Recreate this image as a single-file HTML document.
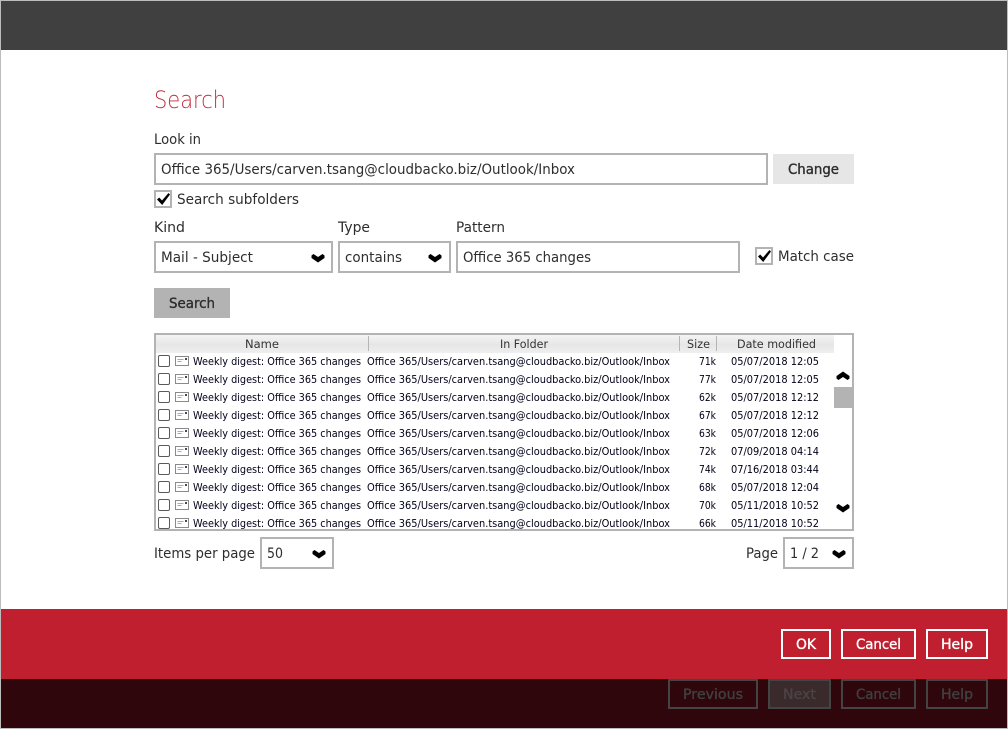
<!DOCTYPE html>
<html><head><meta charset="utf-8"><style>
html,body{margin:0;padding:0;background:#fff}
svg{display:block}
text{font-family:"DejaVu Sans","Liberation Sans",sans-serif;font-size:13.8px;fill:#2e2e2e}
.ttl{font-size:24px;font-weight:200;fill:#bf2e3e}
.b{font-size:13.8px;stroke:#2b2b2b;stroke-width:.35px}
.w{fill:#fff;stroke:#fff}
.d{fill:#404040;stroke:#404040}
.n{fill:#4d4345;stroke:#4d4345}
.t text{font-size:10.7px;fill:#000018}
.h{font-size:11.2px;fill:#333}
</style></head><body>
<svg width="1008" height="729" viewBox="0 0 1008 729" xmlns="http://www.w3.org/2000/svg">
<defs>
<linearGradient id="hd" x1="0" y1="0" x2="0" y2="1"><stop offset="0" stop-color="#f4f4f4"/><stop offset="0.55" stop-color="#e6e6e6"/><stop offset="1" stop-color="#efefef"/></linearGradient>
<path id="chev" d="M0.500 1.500L2.500 0L7 3L11.500 0L13.500 1.500V4L7 8.500L0.500 4Z" fill="#000"/>
<g id="ic"><rect x="158.500" y="0.500" width="11" height="11" rx="1.500" fill="#fff" stroke="#5a5a5a"/>
<rect x="175.500" y="1.500" width="13" height="9" fill="#fff" stroke="#8a8a8a"/><path d="M177.500 4.500h6M177.500 6.500h4" stroke="#aaa"/><rect x="185" y="3" width="2" height="2" fill="#446"/></g>
<path id="ck" d="M0 6.500L2.200 4.500L5 7.500L11.500 0L13 1.500L5.200 12L0 6.500Z" fill="#000"/>
</defs>
<rect width="1008" height="729" fill="#bdbdbd"/>
<rect x="1" y="1" width="1006" height="49" fill="#404040"/>
<rect x="1" y="50" width="1006" height="559" fill="#fff"/>
<rect x="1" y="609" width="1006" height="70" fill="#bf1f2e"/>
<rect x="1" y="679" width="1006" height="49" fill="#2e060b"/>

<text class="ttl" x="154" y="108" textLength="72" lengthAdjust="spacingAndGlyphs">Search</text>
<text x="154" y="144" textLength="47" lengthAdjust="spacingAndGlyphs">Look in</text>

<rect x="155" y="154" width="612" height="30" fill="#fff" stroke="#b3b3b3" stroke-width="2"/>
<text x="161" y="174" textLength="414" lengthAdjust="spacingAndGlyphs">Office 365/Users/carven.tsang@cloudbacko.biz/Outlook/Inbox</text>
<rect x="773" y="154" width="81" height="30" fill="#e6e6e6"/>
<text class="b" x="788" y="174" textLength="51" lengthAdjust="spacingAndGlyphs">Change</text>

<rect x="155" y="191" width="16" height="16" fill="#fff" stroke="#b3b3b3" stroke-width="2"/>
<use href="#ck" x="157" y="193"/>
<text x="177" y="204" textLength="122" lengthAdjust="spacingAndGlyphs">Search subfolders</text>

<text x="154" y="232" textLength="31" lengthAdjust="spacingAndGlyphs">Kind</text>
<text x="338" y="232" textLength="32" lengthAdjust="spacingAndGlyphs">Type</text>
<text x="456" y="232" textLength="49" lengthAdjust="spacingAndGlyphs">Pattern</text>

<rect x="155" y="242" width="177" height="30" fill="#fff" stroke="#b3b3b3" stroke-width="2"/>
<text x="161" y="262" textLength="92" lengthAdjust="spacingAndGlyphs">Mail - Subject</text>
<use href="#chev" x="311" y="254"/>
<rect x="339" y="242" width="111" height="30" fill="#fff" stroke="#b3b3b3" stroke-width="2"/>
<text x="345" y="262" textLength="57" lengthAdjust="spacingAndGlyphs">contains</text>
<use href="#chev" x="428" y="254"/>
<rect x="457" y="242" width="282" height="30" fill="#fff" stroke="#b3b3b3" stroke-width="2"/>
<text x="463" y="262" textLength="128" lengthAdjust="spacingAndGlyphs">Office 365 changes</text>

<rect x="756" y="248" width="16" height="16" fill="#fff" stroke="#b3b3b3" stroke-width="2"/>
<use href="#ck" x="758" y="250"/>
<text x="778" y="261" textLength="76" lengthAdjust="spacingAndGlyphs">Match case</text>

<rect x="154" y="288" width="76" height="30" fill="#b3b3b3"/>
<text class="b" x="169" y="308" textLength="46" lengthAdjust="spacingAndGlyphs">Search</text>

<rect x="155" y="334" width="698" height="196" fill="#fff" stroke="#b3b3b3" stroke-width="2"/>
<rect x="156" y="335" width="678" height="18" fill="url(#hd)"/>
<path d="M368.500 336v15M679.500 336v15M716.500 336v15" stroke="#b5b5b5"/>
<text class="h" x="245" y="348" textLength="34" lengthAdjust="spacingAndGlyphs">Name</text>
<text class="h" x="500" y="348" textLength="48" lengthAdjust="spacingAndGlyphs">In Folder</text>
<text class="h" x="687" y="348" textLength="23" lengthAdjust="spacingAndGlyphs">Size</text>
<text class="h" x="737" y="348" textLength="79" lengthAdjust="spacingAndGlyphs">Date modified</text>

<svg x="156" y="353" width="678" height="176" viewBox="156 353 678 176">
<g class="t">
<g transform="translate(0,355)"><use href="#ic"/><text x="193" y="10" textLength="168" lengthAdjust="spacingAndGlyphs">Weekly digest: Office 365 changes</text><text x="367" y="10" textLength="303" lengthAdjust="spacingAndGlyphs">Office 365/Users/carven.tsang@cloudbacko.biz/Outlook/Inbox</text><text x="699" y="10" textLength="17" lengthAdjust="spacingAndGlyphs">71k</text><text x="731" y="10" textLength="88" lengthAdjust="spacingAndGlyphs">05/07/2018 12:05</text></g>
<g transform="translate(0,373)"><use href="#ic"/><text x="193" y="10" textLength="168" lengthAdjust="spacingAndGlyphs">Weekly digest: Office 365 changes</text><text x="367" y="10" textLength="303" lengthAdjust="spacingAndGlyphs">Office 365/Users/carven.tsang@cloudbacko.biz/Outlook/Inbox</text><text x="699" y="10" textLength="17" lengthAdjust="spacingAndGlyphs">77k</text><text x="731" y="10" textLength="88" lengthAdjust="spacingAndGlyphs">05/07/2018 12:05</text></g>
<g transform="translate(0,391)"><use href="#ic"/><text x="193" y="10" textLength="168" lengthAdjust="spacingAndGlyphs">Weekly digest: Office 365 changes</text><text x="367" y="10" textLength="303" lengthAdjust="spacingAndGlyphs">Office 365/Users/carven.tsang@cloudbacko.biz/Outlook/Inbox</text><text x="699" y="10" textLength="17" lengthAdjust="spacingAndGlyphs">62k</text><text x="731" y="10" textLength="88" lengthAdjust="spacingAndGlyphs">05/07/2018 12:12</text></g>
<g transform="translate(0,409)"><use href="#ic"/><text x="193" y="10" textLength="168" lengthAdjust="spacingAndGlyphs">Weekly digest: Office 365 changes</text><text x="367" y="10" textLength="303" lengthAdjust="spacingAndGlyphs">Office 365/Users/carven.tsang@cloudbacko.biz/Outlook/Inbox</text><text x="699" y="10" textLength="17" lengthAdjust="spacingAndGlyphs">67k</text><text x="731" y="10" textLength="88" lengthAdjust="spacingAndGlyphs">05/07/2018 12:12</text></g>
<g transform="translate(0,427)"><use href="#ic"/><text x="193" y="10" textLength="168" lengthAdjust="spacingAndGlyphs">Weekly digest: Office 365 changes</text><text x="367" y="10" textLength="303" lengthAdjust="spacingAndGlyphs">Office 365/Users/carven.tsang@cloudbacko.biz/Outlook/Inbox</text><text x="699" y="10" textLength="17" lengthAdjust="spacingAndGlyphs">63k</text><text x="731" y="10" textLength="88" lengthAdjust="spacingAndGlyphs">05/07/2018 12:06</text></g>
<g transform="translate(0,445)"><use href="#ic"/><text x="193" y="10" textLength="168" lengthAdjust="spacingAndGlyphs">Weekly digest: Office 365 changes</text><text x="367" y="10" textLength="303" lengthAdjust="spacingAndGlyphs">Office 365/Users/carven.tsang@cloudbacko.biz/Outlook/Inbox</text><text x="699" y="10" textLength="17" lengthAdjust="spacingAndGlyphs">72k</text><text x="731" y="10" textLength="88" lengthAdjust="spacingAndGlyphs">07/09/2018 04:14</text></g>
<g transform="translate(0,463)"><use href="#ic"/><text x="193" y="10" textLength="168" lengthAdjust="spacingAndGlyphs">Weekly digest: Office 365 changes</text><text x="367" y="10" textLength="303" lengthAdjust="spacingAndGlyphs">Office 365/Users/carven.tsang@cloudbacko.biz/Outlook/Inbox</text><text x="699" y="10" textLength="17" lengthAdjust="spacingAndGlyphs">74k</text><text x="731" y="10" textLength="88" lengthAdjust="spacingAndGlyphs">07/16/2018 03:44</text></g>
<g transform="translate(0,481)"><use href="#ic"/><text x="193" y="10" textLength="168" lengthAdjust="spacingAndGlyphs">Weekly digest: Office 365 changes</text><text x="367" y="10" textLength="303" lengthAdjust="spacingAndGlyphs">Office 365/Users/carven.tsang@cloudbacko.biz/Outlook/Inbox</text><text x="699" y="10" textLength="17" lengthAdjust="spacingAndGlyphs">68k</text><text x="731" y="10" textLength="88" lengthAdjust="spacingAndGlyphs">05/07/2018 12:04</text></g>
<g transform="translate(0,499)"><use href="#ic"/><text x="193" y="10" textLength="168" lengthAdjust="spacingAndGlyphs">Weekly digest: Office 365 changes</text><text x="367" y="10" textLength="303" lengthAdjust="spacingAndGlyphs">Office 365/Users/carven.tsang@cloudbacko.biz/Outlook/Inbox</text><text x="699" y="10" textLength="17" lengthAdjust="spacingAndGlyphs">70k</text><text x="731" y="10" textLength="88" lengthAdjust="spacingAndGlyphs">05/11/2018 10:52</text></g>
<g transform="translate(0,517)"><use href="#ic"/><text x="193" y="10" textLength="168" lengthAdjust="spacingAndGlyphs">Weekly digest: Office 365 changes</text><text x="367" y="10" textLength="303" lengthAdjust="spacingAndGlyphs">Office 365/Users/carven.tsang@cloudbacko.biz/Outlook/Inbox</text><text x="699" y="10" textLength="17" lengthAdjust="spacingAndGlyphs">66k</text><text x="731" y="10" textLength="88" lengthAdjust="spacingAndGlyphs">05/11/2018 10:52</text></g>
</g>
</svg>

<use href="#chev" transform="translate(850,380) scale(-1,-1)"/>
<rect x="834" y="387" width="19" height="21" fill="#b3b3b3"/>
<use href="#chev" x="836" y="504"/>

<text x="154" y="558" textLength="101" lengthAdjust="spacingAndGlyphs">Items per page</text>
<rect x="261" y="538" width="72" height="30" fill="#fff" stroke="#b3b3b3" stroke-width="2"/>
<text x="267" y="558" textLength="16" lengthAdjust="spacingAndGlyphs">50</text>
<use href="#chev" x="312" y="550"/>
<text x="746" y="558" textLength="32" lengthAdjust="spacingAndGlyphs">Page</text>
<rect x="784" y="538" width="69" height="30" fill="#fff" stroke="#b3b3b3" stroke-width="2"/>
<text x="790" y="558" textLength="29" lengthAdjust="spacingAndGlyphs">1 / 2</text>
<use href="#chev" x="832" y="550"/>

<g fill="none" stroke="#fff" stroke-width="2">
<rect x="782" y="630" width="48" height="28"/>
<rect x="842" y="630" width="73" height="28"/>
<rect x="927" y="630" width="60" height="28"/>
</g>
<text class="b w" x="796" y="649" textLength="20" lengthAdjust="spacingAndGlyphs">OK</text>
<text class="b w" x="856" y="649" textLength="45" lengthAdjust="spacingAndGlyphs">Cancel</text>
<text class="b w" x="941" y="649" textLength="32" lengthAdjust="spacingAndGlyphs">Help</text>

<g fill="none" stroke="#444" stroke-width="2">
<rect x="669" y="680" width="88" height="28"/>
<rect x="769" y="680" width="61" height="28" fill="#3a2a2c"/>
<rect x="842" y="680" width="73" height="28"/>
<rect x="927" y="680" width="60" height="28"/>
</g>
<text class="b d" x="683" y="699" textLength="60" lengthAdjust="spacingAndGlyphs">Previous</text>
<text class="b n" x="783" y="699" textLength="33" lengthAdjust="spacingAndGlyphs">Next</text>
<text class="b d" x="856" y="699" textLength="45" lengthAdjust="spacingAndGlyphs">Cancel</text>
<text class="b d" x="941" y="699" textLength="32" lengthAdjust="spacingAndGlyphs">Help</text>
</svg>
</body></html>
